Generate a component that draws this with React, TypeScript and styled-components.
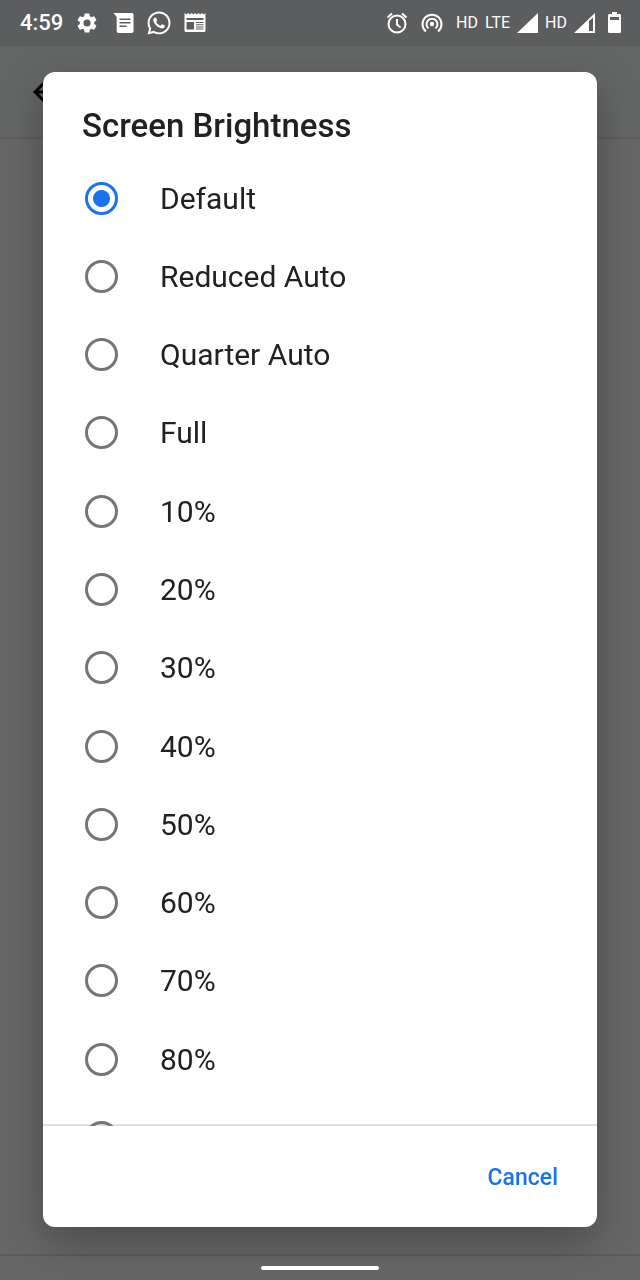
import React, { useState } from "react";
import styled, { createGlobalStyle } from "styled-components";

const GlobalStyle = createGlobalStyle`
  *, *::before, *::after { box-sizing: border-box; }
  html, body, #root { height: 100%; }
  body {
    margin: 0;
    background: #666666;
    color: #202124;
    font-family: Roboto, "Noto Sans", sans-serif;
    overflow: hidden;
  }
`;

const Screen = styled.div`
  min-height: 100%;
  display: flex;
  flex-direction: column;
`;

const StatusBar = styled.header`
  height: 46px;
  padding: 0 19px 0 20px;
  display: flex;
  align-items: center;
  justify-content: space-between;
  background: #5c5d5f;
  color: #ffffff;
`;

const StatusGroup = styled.div<{ $gap: number }>`
  display: flex;
  align-items: center;
  gap: ${(p) => p.$gap}px;
`;

const Clock = styled.time`
  font-size: 22px;
  font-weight: 500;
  line-height: 28px;
`;

const Network = styled.span`
  font-size: 16px;
  line-height: 24px;
`;

const Glyph = styled.svg`
  display: block;
  flex: none;
`;

const AppBar = styled.div`
  height: 93px;
  padding: 0 33px;
  display: flex;
  align-items: center;
  background: #636664;
  border-bottom: 2px solid #5c5e5d;
`;

const BackButton = styled.button`
  padding: 0;
  border: 0;
  background: none;
  color: #000000;
`;

const Content = styled.main`
  flex: 1;
`;

const NavBar = styled.footer`
  height: 26px;
  padding-top: 10px;
  display: flex;
  justify-content: center;
  border-top: 2px solid #5c5c5c;
`;

const HomeHandle = styled.div`
  width: 118px;
  height: 4px;
  border-radius: 2px;
  background: #ffffff;
  z-index: 1;
`;

const Overlay = styled.div`
  position: fixed;
  inset: 0;
  padding: 72px 43px 53px;
  display: flex;
`;

const Dialog = styled.form`
  flex: 1;
  min-width: 0;
  display: flex;
  flex-direction: column;
  border-radius: 12px;
  background: #ffffff;
  box-shadow: 0 14px 40px rgba(0, 0, 0, 0.26);
`;

const Title = styled.h1`
  margin: 0;
  padding: 34px 39px 13px;
  font-size: 33px;
  font-weight: 500;
  line-height: 40px;
`;

const Scroller = styled.div`
  flex: 1;
  min-height: 0;
  overflow-y: auto;
  scrollbar-width: none;
  box-shadow: inset 0 -2px 0 #e0e0e0;
`;

const Options = styled.div`
  height: 1096px;
  display: grid;
  grid-auto-rows: 1fr;
`;

const Option = styled.label`
  padding: 0 42px;
  display: flex;
  align-items: center;
  gap: 42px;
  font-size: 30px;
`;

const Radio = styled.input`
  appearance: none;
  flex: none;
  width: 33px;
  height: 33px;
  margin: 0;
  border: 3px solid #757575;
  border-radius: 50%;
  &:checked {
    border-color: #1a73e8;
    background: radial-gradient(circle, #1a73e8 8px, transparent 9px);
  }
`;

const Actions = styled.div`
  height: 101px;
  padding: 3px 39px 0;
  display: flex;
  align-items: center;
  justify-content: flex-end;
`;

const TextButton = styled.button`
  padding: 0;
  border: 0;
  background: none;
  color: #1a73e8;
  font: 500 23px/32px Roboto, sans-serif;
`;

const levels = [
  "Default", "Reduced Auto", "Quarter Auto", "Full",
  "10%", "20%", "30%", "40%", "50%", "60%", "70%", "80%", "90%", "100%",
];

const GearIcon = () => (
  <Glyph width="24" height="24" viewBox="0 0 24 24" fill="currentColor">
    <path d="M19.14 12.94c.04-.3.06-.61.06-.94 0-.32-.02-.64-.07-.94l2.03-1.58a.49.49 0 0 0 .12-.61l-1.92-3.32a.49.49 0 0 0-.59-.22l-2.39.96c-.5-.38-1.03-.7-1.62-.94l-.36-2.54a.48.48 0 0 0-.48-.41h-3.84a.47.47 0 0 0-.47.41l-.36 2.54c-.59.24-1.13.57-1.62.94l-2.39-.96a.48.48 0 0 0-.59.22L2.74 8.87a.47.47 0 0 0 .12.61l2.03 1.58c-.05.3-.09.63-.09.94s.02.64.07.94l-2.03 1.58a.49.49 0 0 0-.12.61l1.92 3.32c.12.22.37.29.59.22l2.39-.96c.5.38 1.03.7 1.62.94l.36 2.54c.05.24.24.41.48.41h3.84c.24 0 .44-.17.47-.41l.36-2.54c.59-.24 1.13-.56 1.62-.94l2.39.96c.22.08.47 0 .59-.22l1.92-3.32a.47.47 0 0 0-.12-.61zM12 15.6A3.6 3.6 0 1 1 12 8.4a3.6 3.6 0 0 1 0 7.2z" />
  </Glyph>
);

const MessageIcon = () => (
  <Glyph width="24" height="24" viewBox="0 0 24 24" fill="currentColor" fillRule="evenodd">
    <path d="M2.500 2h18.500A1.800 1.800 0 0 1 22.500 3.800V20.200A1.800 1.800 0 0 1 20.700 22H7.500A1.800 1.800 0 0 1 5.700 20.200V6zM8.500 7.500V9H19.500V7.500zM8.500 11V12.500H19.500V11zM8.500 14.500V16H15.500V14.500z" />
  </Glyph>
);

const WhatsAppIcon = () => (
  <Glyph width="24" height="24" viewBox="-0.5 -0.5 25 25" fill="currentColor">
    <path d="M17.472 14.382c-.297-.149-1.758-.867-2.03-.967-.273-.099-.471-.148-.67.15-.197.297-.767.966-.94 1.164-.173.199-.347.223-.644.075-.297-.15-1.255-.463-2.39-1.475-.883-.788-1.48-1.761-1.653-2.059-.173-.297-.018-.458.13-.606.134-.133.298-.347.446-.52.149-.174.198-.298.298-.497.099-.198.05-.371-.025-.52-.075-.149-.669-1.612-.916-2.207-.242-.579-.487-.5-.669-.51-.173-.008-.371-.01-.57-.01-.198 0-.52.074-.792.372-.272.297-1.04 1.016-1.04 2.479 0 1.462 1.065 2.875 1.213 3.074.149.198 2.096 3.2 5.077 4.487.709.306 1.262.489 1.694.625.712.227 1.36.195 1.871.118.571-.085 1.758-.719 2.006-1.413.248-.694.248-1.289.173-1.413-.074-.124-.272-.198-.57-.347m-5.421 7.403h-.004a9.870 9.870 0 0 1-5.031-1.378l-.361-.214-3.741.982.998-3.648-.235-.374a9.860 9.860 0 0 1-1.510-5.260c.001-5.450 4.436-9.884 9.888-9.884 2.640 0 5.122 1.030 6.988 2.898a9.825 9.825 0 0 1 2.893 6.994c-.003 5.450-4.437 9.884-9.885 9.884m8.413-18.297A11.815 11.815 0 0 0 12.050 0C5.495 0 .160 5.335.157 11.892c0 2.096.547 4.142 1.588 5.945L.057 24l6.305-1.654a11.882 11.882 0 0 0 5.683 1.448h.005c6.554 0 11.890-5.335 11.893-11.893a11.821 11.821 0 0 0-3.480-8.413z" />
  </Glyph>
);

const NewsIcon = () => (
  <Glyph width="24" height="24" viewBox="-1 -1 24 24" fill="currentColor" fillRule="evenodd">
    <path d="M.5 1l1.750 1.500L4 1l1.750 1.500L7.500 1l1.750 1.500L11 1l1.750 1.500L14.500 1l1.750 1.500L18 1l1.750 1.500L21.500 1V18.500A1.500 1.500 0 0 1 20 20H2A1.500 1.500 0 0 1 .500 18.500zM2.500 6V8H19.500V6zM2.500 10V17.500H10V10zM12 10V11H19.500V10zM12 12.200V13.200H19.500V12.200zM12 14.400V15.400H19.500V14.400zM12 16.500V17.500H19.500V16.500z" />
  </Glyph>
);

const AlarmIcon = () => (
  <Glyph width="22" height="22" viewBox="0 0 22 22" fill="none" stroke="currentColor" strokeWidth="2">
    <circle cx="11" cy="12" r="8.500" />
    <path d="M11 7v5.500l3.500 3M1.500 5.500l4.500-4M20.500 5.500L16 1.500" />
  </Glyph>
);

const HotspotIcon = () => (
  <Glyph width="22" height="22" viewBox="0 0 22 22" fill="none" stroke="currentColor" strokeWidth="2">
    <circle cx="11" cy="12" r="2.200" fill="currentColor" stroke="none" />
    <path d="M7.500 16.500a5.500 5.500 0 1 1 7 0M5 19.500a9.500 9.500 0 1 1 12 0" />
  </Glyph>
);

const SignalIcon = ({ partial = false }: { partial?: boolean }) => (
  <Glyph width="21" height="22" viewBox="0 0 21 22" fill="currentColor" fillRule="evenodd">
    <path d={partial ? "M21 1V21H0zM15 9V19H19V5.500z" : "M21 1V21H0z"} />
  </Glyph>
);

const BatteryIcon = () => (
  <Glyph width="13" height="22" viewBox="0 0 13 22" fill="currentColor" fillRule="evenodd">
    <path d="M4 0H9V2H11.500A1.500 1.500 0 0 1 13 3.500V19.500A1.500 1.500 0 0 1 11.500 21H1.500A1.500 1.500 0 0 1 0 19.500V3.500A1.500 1.500 0 0 1 1.500 2H4zM2 5V8H11V5z" />
  </Glyph>
);

export default function App() {
  const [level, setLevel] = useState("Default");
  return (
    <>
      <GlobalStyle />
      <Screen>
        <StatusBar>
          <StatusGroup $gap={12}>
            <Clock>4:59</Clock>
            <GearIcon />
            <MessageIcon />
            <WhatsAppIcon />
            <NewsIcon />
          </StatusGroup>
          <StatusGroup $gap={13}>
            <AlarmIcon />
            <HotspotIcon />
            <StatusGroup $gap={7}>
              <Network>HD</Network>
              <Network>LTE</Network>
              <SignalIcon />
              <Network>HD</Network>
              <SignalIcon partial />
            </StatusGroup>
            <BatteryIcon />
          </StatusGroup>
        </StatusBar>
        <AppBar>
          <BackButton type="button" aria-label="Back">
            <Glyph width="24" height="24" viewBox="0 0 24 24" fill="none" stroke="currentColor" strokeWidth="3">
              <path d="M12 2L2 12l10 10M2 12h20" />
            </Glyph>
          </BackButton>
        </AppBar>
        <Content />
        <NavBar><HomeHandle /></NavBar>
      </Screen>
      <Overlay>
        <Dialog role="dialog" aria-labelledby="dialog-title">
          <Title id="dialog-title">Screen Brightness</Title>
          <Scroller>
            <Options role="radiogroup" aria-labelledby="dialog-title">
              {levels.map((name) => (
                <Option key={name}>
                  <Radio type="radio" name="brightness" checked={level === name} onChange={() => setLevel(name)} />
                  {name}
                </Option>
              ))}
            </Options>
          </Scroller>
          <Actions>
            <TextButton type="button">Cancel</TextButton>
          </Actions>
        </Dialog>
      </Overlay>
    </>
  );
}
